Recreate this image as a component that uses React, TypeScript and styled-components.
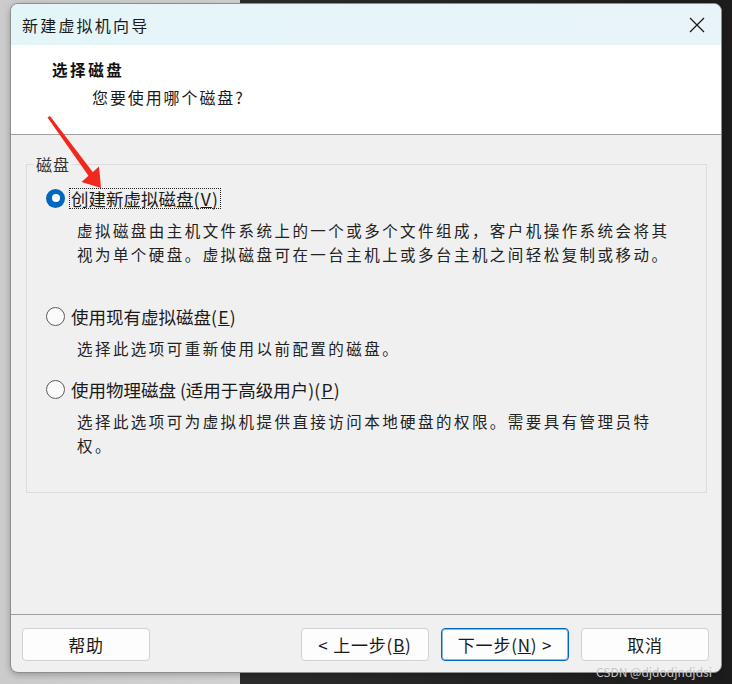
import React from "react";
import styled, { createGlobalStyle } from "styled-components";

const GlobalStyle = createGlobalStyle`
  html, body { margin: 0; padding: 0; }
  body {
    font-family: "Noto Sans CJK SC", "Noto Sans", sans-serif;
    background: #262626;
  }
  * { box-sizing: border-box; }
`;

const CJK = `"Noto Sans CJK SC", "Noto Sans", sans-serif`;

const Page = styled.div`
  position: relative;
  width: 732px;
  height: 684px;
  padding: 3px 0 0 10px;
  background: linear-gradient(to right, #cbcbcb 0, #d2d2d2 240px, #2c2c2c 240px, #1c1c1c 100%);
  overflow: hidden;
`;

const Window = styled.div`
  width: 712px;
  height: 670px;
  border: 1px solid #8e8e8e;
  border-radius: 8px;
  overflow: hidden;
  background: #f0f0f0;
  display: flex;
  flex-direction: column;
  box-shadow: 0 2px 6px rgba(0, 0, 0, 0.25);
`;

const TitleBar = styled.div`
  height: 41px;
  flex: none;
  display: flex;
  align-items: center;
  justify-content: space-between;
  padding: 0 16px 0 11px;
  background: linear-gradient(to right, #e4f5f8, #e9f4f8);
`;

const Title = styled.div`
  font-family: ${CJK};
  font-size: 16px;
  letter-spacing: 2.2px;
  color: #1a1a1a;
  line-height: 20px;
  padding-top: 1px;
`;

const CloseIcon = styled.svg`
  width: 16px;
  height: 16px;
  display: block;
`;

const Header = styled.div`
  height: 90px;
  flex: none;
  background: #ffffff;
  border-bottom: 1px solid #a0a0a0;
  padding: 12px 0 0 41px;
`;

const HeaderTitle = styled.div`
  font-family: ${CJK};
  font-size: 15.5px;
  font-weight: 700;
  letter-spacing: 2.6px;
  line-height: 24px;
  color: #111;
`;

const HeaderSub = styled.div`
  font-family: ${CJK};
  font-size: 16px;
  letter-spacing: 1.9px;
  line-height: 24px;
  color: #1a1a1a;
  margin: 4px 0 0 40px;
`;

const Content = styled.div`
  flex: 1;
  padding: 19px 14px 0 15px;
`;

const Group = styled.fieldset`
  margin: 0;
  border: 1px solid #dcdcdc;
  padding: 12px 0 35px 0;
  min-width: 0;
`;

const Legend = styled.legend`
  margin-left: 7px;
  padding: 0 2px;
  font-family: ${CJK};
  font-size: 16px;
  letter-spacing: 1px;
  line-height: 20px;
  color: #333;
`;

const Option = styled.div<{ $gap: number }>`
  margin-top: ${(p) => p.$gap}px;
`;

const OptionRow = styled.div`
  height: 24px;
  display: flex;
  align-items: center;
  padding-left: 19px;
`;

const Radio = styled.span<{ $checked?: boolean }>`
  width: 19px;
  height: 19px;
  flex: none;
  border-radius: 50%;
  display: flex;
  align-items: center;
  justify-content: center;
  background: ${(p) => (p.$checked ? "#0067c0" : "#fbfbfb")};
  border: ${(p) => (p.$checked ? "none" : "1.3px solid #5c5c5c")};
  &::after {
    content: "";
    display: ${(p) => (p.$checked ? "block" : "none")};
    width: 8px;
    height: 8px;
    border-radius: 50%;
    background: #ffffff;
  }
`;

const OptionLabel = styled.span<{ $focused?: boolean }>`
  margin-left: 5px;
  padding: 0 1px;
  font-family: ${CJK};
  font-size: 17.5px;
  line-height: 19px;
  color: #1a1a1a;
  outline: ${(p) => (p.$focused ? "1px dotted #222" : "none")};
  outline-offset: 0;
  white-space: nowrap;
`;

const Latin = styled.span`
  letter-spacing: 1.2px;
`;

const Description = styled.div`
  margin-top: 8px;
  padding-left: 50px;
  font-family: ${CJK};
  font-size: 15.5px;
  letter-spacing: 2.45px;
  line-height: 24px;
  color: #222;
  white-space: nowrap;
`;

const Footer = styled.div`
  flex: none;
  height: 58px;
  border-top: 1px solid #a0a0a0;
  padding: 13px 12px 0 11px;
  display: flex;
  justify-content: space-between;
  align-items: flex-start;
`;

const ButtonGroup = styled.div`
  display: flex;
  gap: 12px;
`;

const Button = styled.button<{ $primary?: boolean }>`
  width: 128px;
  height: 33px;
  border-radius: 4px;
  background: #fdfdfd;
  border: 1px solid ${(p) => (p.$primary ? "#0067c0" : "#d0d0d0")};
  box-shadow: ${(p) => (p.$primary ? "inset 0 0 0 1px rgba(0,103,192,0.45)" : "none")};
  font-family: ${CJK};
  font-size: 17px;
  letter-spacing: 0.8px;
  white-space: pre;
  color: #1a1a1a;
  padding: 0;
  display: flex;
  align-items: center;
  justify-content: center;
  cursor: default;
`;

const Arrow = styled.svg`
  position: absolute;
  left: 0;
  top: 0;
  width: 732px;
  height: 684px;
  pointer-events: none;
`;

const Watermark = styled.div`
  position: absolute;
  right: 20px;
  bottom: 5px;
  font-family: ${CJK};
  font-size: 12px;
  line-height: 14px;
  color: #c6c6c6;
  white-space: nowrap;
`;

export default function App() {
  return (
    <>
      <GlobalStyle />
      <Page>
        <Window>
          <TitleBar>
            <Title>新建虚拟机向导</Title>
            <CloseIcon viewBox="0 0 16 16">
              <path d="M1 1 L15 15 M15 1 L1 15" stroke="#1a1a1a" strokeWidth="1.3" fill="none" />
            </CloseIcon>
          </TitleBar>
          <Header>
            <HeaderTitle>选择磁盘</HeaderTitle>
            <HeaderSub>您要使用哪个磁盘?</HeaderSub>
          </Header>
          <Content>
            <Group>
              <Legend>磁盘</Legend>
              <Option $gap={0}>
                <OptionRow>
                  <Radio $checked />
                  <OptionLabel $focused>
                    创建新虚拟磁盘<Latin>(<u>V</u>)</Latin>
                  </OptionLabel>
                </OptionRow>
                <Description>
                  虚拟磁盘由主机文件系统上的一个或多个文件组成，客户机操作系统会将其
                  <br />
                  视为单个硬盘。虚拟磁盘可在一台主机上或多台主机之间轻松复制或移动。
                </Description>
              </Option>
              <Option $gap={38}>
                <OptionRow>
                  <Radio />
                  <OptionLabel>
                    使用现有虚拟磁盘<Latin>(<u>E</u>)</Latin>
                  </OptionLabel>
                </OptionRow>
                <Description>选择此选项可重新使用以前配置的磁盘。</Description>
              </Option>
              <Option $gap={17}>
                <OptionRow>
                  <Radio />
                  <OptionLabel>
                    使用物理磁盘 (适用于高级用户)<Latin>(<u>P</u>)</Latin>
                  </OptionLabel>
                </OptionRow>
                <Description>
                  选择此选项可为虚拟机提供直接访问本地硬盘的权限。需要具有管理员特
                  <br />
                  权。
                </Description>
              </Option>
            </Group>
          </Content>
          <Footer>
            <Button>帮助</Button>
            <ButtonGroup>
              <Button>
                {"< 上一步("}<u>B</u>{")"}
              </Button>
              <Button $primary>
                {"下一步("}<u>N</u>{") >"}
              </Button>
              <Button>取消</Button>
            </ButtonGroup>
          </Footer>
        </Window>
        <Arrow viewBox="0 0 732 684">
          <polygon points="47.5,117.5 50,116 93.5,173 89,176.5" fill="#f2281c" />
          <polygon points="101,188 81.5,182 99,166.5" fill="#f2281c" />
        </Arrow>
        <Watermark>CSDN @djdodjndjdsi</Watermark>
      </Page>
    </>
  );
}
